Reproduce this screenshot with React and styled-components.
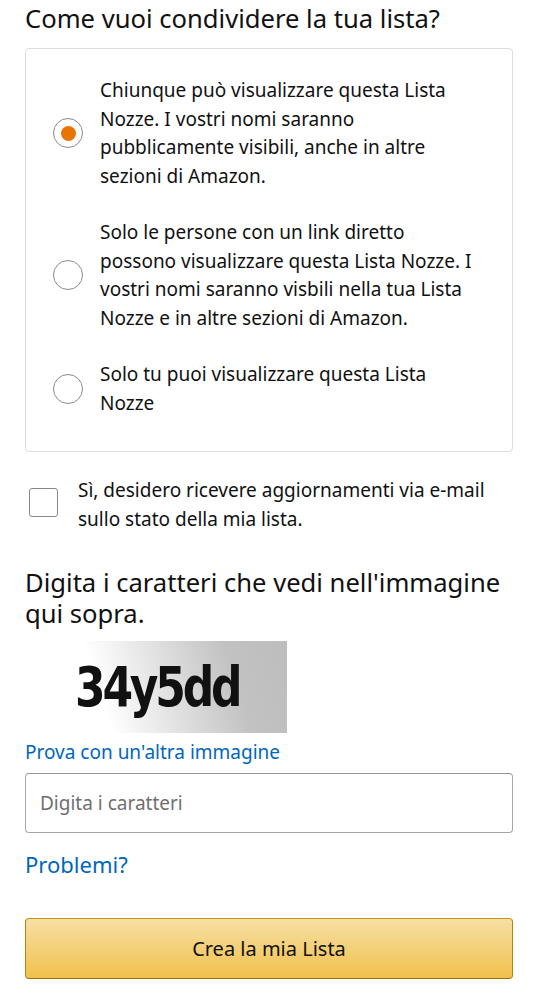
import React from 'react';
import styled, { createGlobalStyle } from 'styled-components';

const Global = createGlobalStyle`
  body {
    margin: 0;
    background: #fff;
    font-family: "Noto Sans", "Liberation Sans", sans-serif;
    color: #111;
  }
`;

const Page = styled.div`
  padding: 0 25px 24px 25px;
  display: flex;
  flex-direction: column;
`;

const Title = styled.h2`
  margin: 0;
  font-size: 25.6px;
  font-weight: 400;
  line-height: 32px;
  padding-top: 3px;
`;

const Card = styled.div`
  margin-top: 13px;
  border: 1px solid #ddd;
  border-radius: 4px;
  padding: 27px 36px 34px 27px;
  display: flex;
  flex-direction: column;
  gap: 28px;
`;

const Option = styled.label`
  display: flex;
  align-items: center;
  gap: 17px;
`;

const Radio = styled.span`
  flex: 0 0 auto;
  width: 30px;
  height: 30px;
  box-sizing: border-box;
  border-radius: 50%;
  border: 1.5px solid #8a8a8a;
  display: flex;
  align-items: center;
  justify-content: center;
  &::after {
    content: '';
    width: 15px;
    height: 15px;
    border-radius: 50%;
    background: ${p => (p.$checked ? '#e77600' : 'transparent')};
  }
`;

const Text = styled.span`
  font-size: 19px;
  line-height: 28.5px;
`;

const CheckRow = styled.label`
  display: flex;
  align-items: center;
  gap: 20px;
  margin-top: 24px;
  padding-left: 4px;
`;

const Box = styled.span`
  flex: 0 0 auto;
  width: 29px;
  height: 29px;
  margin-top: -5px;
  box-sizing: border-box;
  border: 1.5px solid #888;
  border-radius: 3px;
`;

const Heading = styled.h3`
  margin: 34px 0 0;
  font-size: 25.6px;
  font-weight: 400;
  line-height: 31px;
`;

const Captcha = styled.div`
  margin-top: 12px;
  width: 262px;
  height: 92px;
  background: linear-gradient(72deg, #fff 30%, #c2c2c2 78%, #bdbdbd);
  display: flex;
  align-items: center;
  padding-left: 50px;
  box-sizing: border-box;
`;

const CaptchaText = styled.span`
  display: inline-block;
  font-family: "DejaVu Sans", sans-serif;
  font-weight: 700;
  font-size: 55px;
  letter-spacing: -4px;
  color: #111;
  transform: scaleX(0.8);
  transform-origin: left center;
`;

const Link = styled.a`
  color: #0066c0;
  font-size: ${p => p.$size || 19}px;
  line-height: 28px;
  text-decoration: none;
  margin-top: ${p => p.$top || 0}px;
`;

const Input = styled.input`
  margin-top: 7px;
  height: 60px;
  box-sizing: border-box;
  border: 1px solid #a6a6a6;
  border-top-color: #949494;
  border-radius: 4px;
  padding: 0 14px;
  font-family: inherit;
  font-size: 19px;
  &::placeholder {
    color: #6f6f6f;
  }
`;

const Button = styled.button`
  margin-top: 40px;
  height: 61px;
  border: 1px solid #a88734;
  border-color: #c89411 #b0820f #99710d;
  border-radius: 4px;
  background: linear-gradient(to bottom, #f7dfa5, #f0c14b);
  font-family: inherit;
  font-size: 20px;
  color: #111;
`;

const options = [
  {
    text: 'Chiunque può visualizzare questa Lista Nozze. I vostri nomi saranno pubblicamente visibili, anche in altre sezioni di Amazon.',
    checked: true,
  },
  {
    text: 'Solo le persone con un link diretto possono visualizzare questa Lista Nozze. I vostri nomi saranno visbili nella tua Lista Nozze e in altre sezioni di Amazon.',
  },
  { text: 'Solo tu puoi visualizzare questa Lista Nozze' },
];

export default function App() {
  return (
    <Page>
      <Global />
      <Title>Come vuoi condividere la tua lista?</Title>
      <Card>
        {options.map((o, i) => (
          <Option key={i}>
            <Radio $checked={o.checked} />
            <Text>{o.text}</Text>
          </Option>
        ))}
      </Card>
      <CheckRow>
        <Box />
        <Text>Sì, desidero ricevere aggiornamenti via e-mail sullo stato della mia lista.</Text>
      </CheckRow>
      <Heading>Digita i caratteri che vedi nell'immagine qui sopra.</Heading>
      <Captcha>
        <CaptchaText>34y5dd</CaptchaText>
      </Captcha>
      <Link href="#" $top={5}>Prova con un'altra immagine</Link>
      <Input placeholder="Digita i caratteri" />
      <Link href="#" $size={22} $top={17}>Problemi?</Link>
      <Button>Crea la mia Lista</Button>
    </Page>
  );
}
